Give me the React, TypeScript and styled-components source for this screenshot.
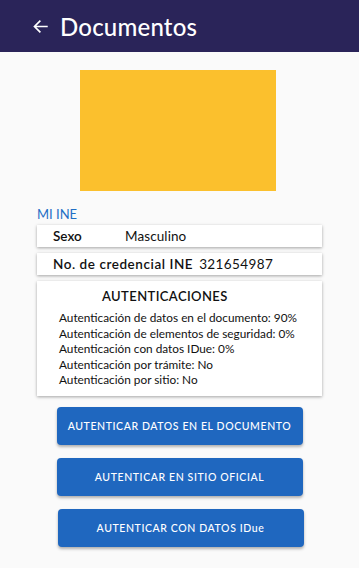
import styled, { createGlobalStyle } from "styled-components";

const GlobalStyle = createGlobalStyle`
  html, body {
    margin: 0;
    padding: 0;
    background: #fafafa;
  }
  body {
    font-family: "Lato", "Noto Sans", sans-serif;
  }
`;

const Page = styled.div`
  width: 359px;
  min-height: 568px;
  background: #fafafa;
`;
const Header = styled.header`
  height: 52px;
  background: #2a2459;
  display: flex;
  align-items: center;
  padding-left: 32px;
  gap: 11px;
  color: #fff;
`;
const BackIcon = styled.svg`
  width: 17px;
  height: 17px;
  display: block;
`;
const Title = styled.h1`
  margin: 0;
  font-size: 24px;
  font-weight: 500;
  letter-spacing: 0.2px;
`;
const Content = styled.main`
  display: flex;
  flex-direction: column;
  padding: 18px 37px 0 37px;
`;
const Photo = styled.div`
  width: 196px;
  height: 121px;
  background: #fbc02d;
  align-self: center;
  margin-left: -4px;
`;
const Section = styled.div`
  margin-top: 15px;
  color: #1f6fc5;
  font-size: 13px;
  line-height: 17px;
`;
const Card = styled.div`
  background: #fff;
  box-shadow: 0 1px 3px rgba(0, 0, 0, 0.35);
  margin-top: 2px;
`;
const Row = styled(Card)`
  height: 22px;
  display: flex;
  align-items: center;
  padding-left: 16px;
  font-size: 13.5px;
  color: #111;
  margin-bottom: 4px;
`;
const Label = styled.span<{ $w?: number }>`
  font-weight: 600;
  letter-spacing: ${(p) => (p.$w ? "0" : "0.55px")};
  width: ${(p) => (p.$w ? `${p.$w}px` : "auto")};
  margin-right: ${(p) => (p.$w ? "0" : "6px")};
`;
const Value = styled.span<{ $spaced?: boolean }>`
  letter-spacing: ${(p) => (p.$spaced ? "0.4px" : "0.1px")};
`;
const AuthCard = styled(Card)`
  padding: 8px 0 9px 22px;
  font-size: 11.8px;
  line-height: 15.4px;
  color: #111;
`;
const AuthTitle = styled.div`
  font-size: 13px;
  font-weight: 600;
  margin: 0 0 6px 43px;
  letter-spacing: 0.4px;
`;
const Buttons = styled.div`
  display: flex;
  flex-direction: column;
  align-items: center;
  gap: 13px;
  margin-top: 11px;
`;
const Button = styled.button<{ $shift?: number }>`
  width: 246px;
  height: 38px;
  border: none;
  border-radius: 4px;
  background: #1f67bf;
  color: #fff;
  font-family: "Lato", "Noto Sans", sans-serif;
  font-size: 10.5px;
  font-weight: 500;
  letter-spacing: 0.6px;
  box-shadow: 0 2px 3px rgba(0, 0, 0, 0.3);
  margin-left: ${(p) => (p.$shift ?? 0) * 2}px;
  cursor: pointer;
`;

const auths = [
  "Autenticación de datos en el documento: 90%",
  "Autenticación de elementos de seguridad: 0%",
  "Autenticación con datos IDue: 0%",
  "Autenticación por trámite: No",
  "Autenticación por sitio: No",
];

function App() {
  return (
    <Page>
      <GlobalStyle />
      <Header>
        <BackIcon viewBox="0 0 24 24" fill="none" stroke="#fff" strokeWidth="2.4" strokeLinecap="square">
          <path d="M21 12H4M11 4.5L3.5 12L11 19.5" />
        </BackIcon>
        <Title>Documentos</Title>
      </Header>
      <Content>
        <Photo />
        <Section>MI INE</Section>
        <Row>
          <Label $w={72}>Sexo</Label>
          <Value>Masculino</Value>
        </Row>
        <Row>
          <Label>No. de credencial INE</Label>
          <Value $spaced>321654987</Value>
        </Row>
        <AuthCard>
          <AuthTitle>AUTENTICACIONES</AuthTitle>
          {auths.map((a) => (
            <div key={a}>{a}</div>
          ))}
        </AuthCard>
        <Buttons>
          <Button>AUTENTICAR DATOS EN EL DOCUMENTO</Button>
          <Button>AUTENTICAR EN SITIO OFICIAL</Button>
          <Button $shift={1}>AUTENTICAR CON DATOS IDue</Button>
        </Buttons>
      </Content>
    </Page>
  );
}

export default App;
